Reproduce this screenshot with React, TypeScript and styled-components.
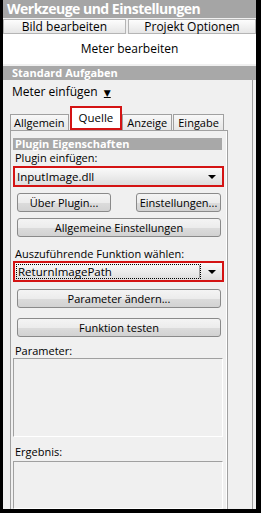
import styled, { createGlobalStyle } from 'styled-components';

const GlobalStyle = createGlobalStyle`
  html, body {
    margin: 0;
    padding: 0;
    background: #000;
  }
  body {
    font-family: 'Open Sans', 'Noto Sans', 'DejaVu Sans', sans-serif;
    font-size: 11px;
    color: #000;
  }
`;

const tabs = ['Allgemein', 'Quelle', 'Anzeige', 'Eingabe'];

export default function App() {
  return (
    <>
      <GlobalStyle />
      <Frame>
        <TitleBar>Werkzeuge und Einstellungen</TitleBar>
        <TopButtons>
          <TopButton>Bild bearbeiten</TopButton>
          <TopButton>Projekt Optionen</TopButton>
        </TopButtons>
        <WhiteArea>Meter bearbeiten</WhiteArea>
        <SectionBar>Standard Aufgaben</SectionBar>
        <Body>
          <Content>
            <MenuLink>
              Meter einfügen <Arrow>▼</Arrow>
            </MenuLink>
            <TabStrip>
              {tabs.map((t) => (
                <Tab key={t} $active={t === 'Quelle'}>
                  {t}
                </Tab>
              ))}
            </TabStrip>
            <Panel>
              <PanelHeader>Plugin Eigenschaften</PanelHeader>
              <Label $top={1}>Plugin einfügen:</Label>
              <Select $top={2}>
                <SelectText>InputImage.dll</SelectText>
                <DropArrow />
              </Select>
              <ButtonRow>
                <Button $top={0}>Über Plugin...</Button>
                <Button $top={0}>Einstellungen...</Button>
              </ButtonRow>
              <Button $top={6}>Allgemeine Einstellungen</Button>
              <Label $top={10}>Auszuführende Funktion wählen:</Label>
              <Select $top={1}>
                <FocusText>ReturnImagePath</FocusText>
                <DropArrow />
              </Select>
              <Button $top={7}>Parameter ändern...</Button>
              <Button $top={10}>Funktion testen</Button>
              <Label $top={7}>Parameter:</Label>
              <TextBox $top={1} $height={77} />
              <Label $top={8}>Ergebnis:</Label>
              <TextBox $top={3} $grow />
            </Panel>
          </Content>
          <Side />
        </Body>
      </Frame>
    </>
  );
}

const Frame = styled.div`
  width: 253px;
  height: 509px;
  margin: 0 5px 0 3px;
  background: #f0f0f0;
  display: flex;
  flex-direction: column;
  overflow: hidden;
`;

const TitleBar = styled.div`
  height: 18px;
  line-height: 18px;
  background: #a5a5a5;
  color: #fff;
  font-weight: 700;
  font-size: 14px;
  letter-spacing: -0.5px;
  padding-left: 4px;
  white-space: nowrap;
`;

const TopButtons = styled.div`
  display: grid;
  grid-template-columns: 123px 1fr;
  gap: 2px;
  padding-top: 1px;
`;

const TopButton = styled.div`
  height: 13px;
  line-height: 13px;
  text-align: center;
  font-size: 12px;
  border: 1px solid #b5b5b5;
  background: linear-gradient(#fdfdfd, #e6e6e6);
`;

const WhiteArea = styled.div`
  height: 30px;
  background: #fff;
  text-align: center;
  line-height: 29px;
  font-size: 12px;
`;

const SectionBar = styled.div`
  margin-top: 2px;
  height: 14px;
  line-height: 14px;
  background: #a8a8a8;
  color: #fff;
  font-weight: 700;
  font-size: 11px;
  padding-left: 9px;
`;

const Body = styled.div`
  flex: 1;
  display: flex;
  min-height: 0;
`;

const Content = styled.div`
  width: 218px;
  padding-left: 7px;
  display: flex;
  flex-direction: column;
`;

const MenuLink = styled.div`
  height: 26px;
  line-height: 24px;
  padding-left: 2px;
  font-size: 12px;
`;

const Arrow = styled.span`
  font-size: 9px;
  text-decoration: underline;
  margin-left: 3px;
`;

const TabStrip = styled.div`
  display: flex;
  align-items: flex-end;
  height: 24px;
`;

const Tab = styled.div<{ $active: boolean }>`
  box-sizing: border-box;
  height: ${(p) => (p.$active ? 24 : 16)}px;
  line-height: ${(p) => (p.$active ? 20 : 15)}px;
  padding: 0 ${(p) => (p.$active ? 7 : 4)}px;
  font-size: ${(p) => (p.$active ? 11.5 : 11)}px;
  background: ${(p) => (p.$active ? '#fff' : 'linear-gradient(#f8f8f8, #e6e6e6)')};
  border: ${(p) => (p.$active ? '2px solid #d41313' : '1px solid #a0a0a0')};
  border-bottom: ${(p) => (p.$active ? '2px solid #d41313' : 'none')};
  margin-right: ${(p) => (p.$active ? '0' : '1px')};
  &:first-child {
    padding: 0 3px;
  }
`;

const Panel = styled.div`
  flex: 1;
  border: 1px solid #a0a0a0;
  border-bottom: none;
  box-shadow: inset -1px 0 0 #fff;
  padding: 7px 3px 0 2px;
  display: flex;
  flex-direction: column;
`;

const PanelHeader = styled.div`
  height: 12px;
  line-height: 12px;
  margin-right: 2px;
  padding-left: 2px;
  background: #a8a8a8;
  color: #fff;
  font-weight: 700;
  font-size: 11px;
  white-space: nowrap;
`;

const Label = styled.div<{ $top: number }>`
  margin-top: ${(p) => p.$top}px;
  padding-left: 2px;
  font-size: 11px;
  line-height: 13px;
  white-space: nowrap;
`;

const Select = styled.div<{ $top: number }>`
  margin-top: ${(p) => p.$top}px;
  height: 17px;
  border: 2px solid #d41313;
  background: linear-gradient(#fafafa 0%, #ececec 50%, #dddddd 100%);
  display: flex;
  align-items: center;
  padding: 0 6px 0 2px;
`;

const SelectText = styled.div`
  flex: 1;
  font-size: 11.5px;
`;

const FocusText = styled.div`
  flex: 1;
  font-size: 11.5px;
  line-height: 13px;
  outline: 1px dotted #000;
  margin-right: 8px;
  padding-left: 1px;
  border-right: 1px solid #a0a0a0;
`;

const DropArrow = styled.div`
  width: 0;
  height: 0;
  border-left: 4px solid transparent;
  border-right: 4px solid transparent;
  border-top: 4px solid #000;
`;

const ButtonRow = styled.div`
  margin-top: 6px;
  display: grid;
  grid-template-columns: 94px 85px;
  justify-content: space-between;
  padding: 0 3px 0 4px;
`;

const Button = styled.div<{ $top: number }>`
  margin: ${(p) => p.$top}px 3px 0 4px;
  height: 17px;
  line-height: 17px;
  text-align: center;
  font-size: 11px;
  border: 1px solid #8a8a8a;
  border-radius: 3px;
  background: linear-gradient(#f4f4f4 0%, #ececec 50%, #dcdcdc 51%, #d2d2d2 100%);
  ${ButtonRow} & {
    margin: 0;
  }
`;

const TextBox = styled.div<{ $top: number; $height?: number; $grow?: boolean }>`
  margin-top: ${(p) => p.$top}px;
  margin-right: 1px;
  ${(p) => (p.$grow ? 'flex: 1;' : `height: ${p.$height}px;`)}
  border: 1px solid #a0a0a0;
  border-right-color: #fff;
  border-bottom-color: #fff;
  background: #f0f0f0;
`;

const Side = styled.div`
  flex: 1;
  border-right: 1px solid #a0a0a0;
  margin-right: 3px;
`;
